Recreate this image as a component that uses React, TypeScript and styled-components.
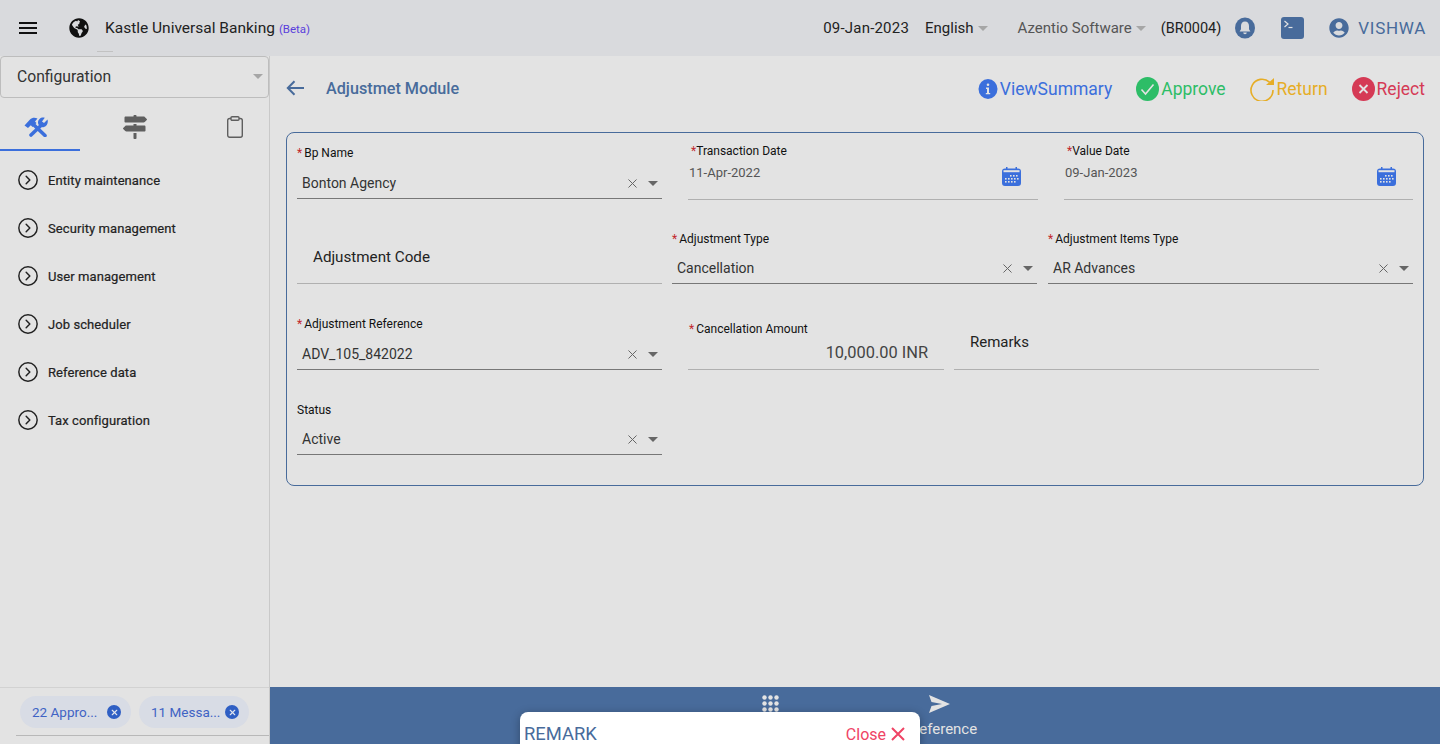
import React from "react";
import styled, { createGlobalStyle } from "styled-components";
import { FaGlobeAmericas, FaMapSigns, FaUserCircle } from "react-icons/fa";
import { CircleChevronRight, X } from "lucide-react";

const GlobalStyle = createGlobalStyle`
  html, body {
    margin: 0;
    padding: 0;
    height: 744px;
    overflow: hidden;
    background: #e3e3e3;
    font-family: Roboto, "Liberation Sans", sans-serif;
  }
  * { box-sizing: border-box; }
`;

const Page = styled.div`
  position: relative;
  width: 1440px;
  height: 744px;
  overflow: hidden;
  display: flex;
  flex-direction: column;
`;

const Header = styled.header`
  position: relative;
  height: 56px;
  flex: none;
  background: #d9dadd;
  display: flex;
  align-items: center;
  padding: 0 14px 0 19px;
`;

const HeaderMark = styled.span`
  position: absolute;
  left: 97px;
  bottom: 4px;
  width: 16px;
  height: 1px;
  background: #c2c2c2;
`;

const Burger = styled.div`
  width: 18px;
  display: flex;
  flex-direction: column;
  gap: 3px;
  span {
    height: 2px;
    background: #111;
  }
`;

const Globe = styled(FaGlobeAmericas)`
  margin-left: 32px;
  width: 20px;
  height: 20px;
  color: #111;
`;

const AppTitle = styled.div`
  margin-left: 16px;
  font-size: 15.5px;
  color: #222;
  display: flex;
  align-items: baseline;
  gap: 4px;
`;

const Beta = styled.span`
  font-size: 11.5px;
  color: #5b3fdc;
`;

const HeaderRight = styled.div`
  margin-left: auto;
  display: flex;
  align-items: center;
`;

const HeaderText = styled.span<{ $left: number; $size?: number; $color?: string; $spacing?: number }>`
  margin-left: ${(p) => p.$left}px;
  font-size: ${(p) => p.$size ?? 15}px;
  letter-spacing: ${(p) => p.$spacing ?? 0}px;
  color: ${(p) => p.$color ?? "#222"};
`;

const Caret = styled.span<{ $color?: string; $left?: number }>`
  display: inline-block;
  margin-left: ${(p) => p.$left ?? 4}px;
  border-left: 5px solid transparent;
  border-right: 5px solid transparent;
  border-top: 5px solid ${(p) => p.$color ?? "#a6a6a6"};
`;

const HeaderIcon = styled.span<{ $left: number }>`
  margin-left: ${(p) => p.$left}px;
  display: flex;
  color: #486b9b;
`;

const Body = styled.div`
  flex: 1;
  display: flex;
  min-height: 0;
`;

const Sidebar = styled.aside`
  width: 270px;
  flex: none;
  border-right: 1px solid #c9c9c9;
  display: flex;
  flex-direction: column;
`;

const ModuleSelect = styled.div`
  height: 42px;
  border: 1px solid #bdbdbd;
  border-radius: 4px;
  display: flex;
  align-items: center;
  justify-content: space-between;
  padding: 0 5px 2px 16px;
  font-size: 15.7px;
  color: #333;
`;

const Tabs = styled.div`
  display: grid;
  grid-template-columns: 80px 110px 80px;
  height: 53px;
`;

const Tab = styled.div<{ $active?: boolean; $inset?: number }>`
  display: flex;
  align-items: center;
  justify-content: center;
  color: #5f5f5f;
  border-bottom: 2px solid ${(p) => (p.$active ? "#3b6fdc" : "transparent")};
  padding-top: 7px;
  padding-left: ${(p) => Math.max(p.$inset ?? 0, 0)}px;
  padding-right: ${(p) => Math.max(-(p.$inset ?? 0), 0)}px;
`;

const MenuList = styled.nav`
  flex: 1;
  padding-top: 5px;
`;

const MenuItem = styled.div`
  height: 48px;
  display: flex;
  align-items: center;
  gap: 9px;
  padding-left: 17px;
  font-size: 13px;
  letter-spacing: 0.08px;
  color: #222;
  -webkit-text-stroke: 0.2px #222;
`;

const SideFooter = styled.div`
  height: 57px;
  flex: none;
  border-top: 1px solid #d2d2d2;
  padding: 8px 0 0 20px;
  position: relative;
  display: flex;
  gap: 8px;
  &::after {
    content: "";
    position: absolute;
    left: 16px;
    right: 0;
    bottom: 8px;
    height: 1px;
    background: #b8b8b8;
  }
`;

const Chip = styled.div<{ $width: number }>`
  width: ${(p) => p.$width}px;
  height: 32px;
  border-radius: 16px;
  background: #d8dce5;
  color: #3f63c4;
  font-size: 13.5px;
  display: flex;
  align-items: center;
  justify-content: space-between;
  padding: 0 10px 0 12px;
`;

const ChipClose = styled.span`
  width: 14px;
  height: 14px;
  border-radius: 50%;
  background: #2f5fc4;
  color: #e3e6ee;
  display: flex;
  align-items: center;
  justify-content: center;
`;

const Main = styled.main`
  flex: 1;
  min-width: 0;
  display: flex;
  flex-direction: column;
`;

const Content = styled.div`
  flex: 1;
  padding: 0 16px;
`;

const ActionBar = styled.div`
  height: 66px;
  margin: 0 -1px 10px 0;
  display: flex;
  align-items: center;
`;

const TitleGroup = styled.div`
  display: flex;
  align-items: center;
  padding-bottom: 2px;
`;

const PageTitle = styled.h1`
  margin: 0 0 0 22px;
  font-size: 16.2px;
  font-weight: 500;
  color: #486b9b;
`;

const Actions = styled.div`
  margin-left: auto;
  display: flex;
  align-items: center;
  gap: 24px;
`;

const Action = styled.div<{ $color: string }>`
  display: flex;
  align-items: center;
  gap: 2px;
  font-size: 17.5px;
  color: ${(p) => p.$color};
`;

const FormCard = styled.section`
  height: 354px;
  border: 1px solid #486b9b;
  border-radius: 8px;
  padding-left: 10px;
`;

const FormRow = styled.div<{ $height: number }>`
  display: flex;
  height: ${(p) => p.$height}px;
  align-items: flex-end;
`;

const Field = styled.div<{ $width: number; $left?: number; $line?: string; $height?: number }>`
  width: ${(p) => p.$width}px;
  height: ${(p) => p.$height ?? 66}px;
  margin-left: ${(p) => p.$left ?? 0}px;
  border-bottom: 1px solid ${(p) => p.$line ?? "#777"};
  display: flex;
  flex-direction: column;
  position: relative;
`;

const DateField = styled(Field)`
  margin-bottom: -1px;
`;

const Label = styled.label<{ $indent?: number }>`
  font-size: 12px;
  line-height: 14px;
  color: #111;
  padding-left: ${(p) => p.$indent ?? 0}px;
`;

const Star = styled.span<{ $tight?: boolean }>`
  color: #c2272d;
  margin-right: ${(p) => (p.$tight ? 0 : 2)}px;
`;

const SelectValue = styled.div`
  height: 30px;
  margin-top: auto;
  display: flex;
  align-items: center;
  padding: 0 4px 0 5px;
  font-size: 14px;
  color: #333;
`;

const SelectText = styled.span`
  flex: 1;
`;

const Cross = styled(X)`
  width: 15px;
  height: 15px;
  color: #666;
  margin-right: 8px;
`;

const DateValue = styled.div`
  display: flex;
  justify-content: space-between;
  padding: 7px 17px 0 1px;
  font-size: 13px;
  color: #555;
  svg {
    margin-top: 2px;
  }
`;

const PlainField = styled.div<{ $size: number; $indent: number; $top: number }>`
  padding: ${(p) => p.$top}px 0 0 ${(p) => p.$indent}px;
  font-size: ${(p) => p.$size}px;
  color: #222;
`;

const AmountValue = styled.div`
  text-align: right;
  padding: 7px 16px 0 0;
  font-size: 16.4px;
  color: #444;
`;

const FooterBar = styled.div`
  height: 57px;
  flex: none;
  background: #486b9b;
  display: flex;
  padding: 8px 0 0 492px;
  color: #e3e3e3;
`;

const FooterItem = styled.div<{ $left?: number; $iconInset?: number }>`
  margin-left: ${(p) => p.$left ?? 0}px;
  display: flex;
  flex-direction: column;
  align-items: flex-start;
  font-size: 15px;
  line-height: 16px;
  gap: 8px;
  svg {
    margin-left: ${(p) => p.$iconInset ?? 0}px;
  }
`;

const RemarkPanel = styled.div`
  position: absolute;
  left: 520px;
  top: 712px;
  width: 400px;
  height: 60px;
  background: #fff;
  border-radius: 8px;
  box-shadow: 0 2px 10px rgba(0, 0, 0, 0.3);
  display: flex;
  justify-content: space-between;
  padding: 12px 15px 0 4px;
`;

const RemarkTitle = styled.span`
  font-size: 18.4px;
  line-height: 20px;
  color: #486b9b;
`;

const RemarkClose = styled.span`
  display: flex;
  align-items: center;
  height: 20px;
  gap: 5px;
  font-size: 16px;
  color: #ef4465;
`;

const ToolsIcon = () => (
  <svg width="24" height="20" viewBox="0 0 24 20" fill="#3b6fdc" stroke="none">
    <path d="M0.500 8.500L6 2.500C8 0.500 11 0.300 13.500 1.500L11 4.500L12.500 6L8.500 10L6.800 8.300L4 11z" />
    <path d="M10 8l11 10.500" stroke="#3b6fdc" strokeWidth="3.600" strokeLinecap="round" />
    <path d="M17.500 8L7 18" stroke="#3b6fdc" strokeWidth="3.600" strokeLinecap="round" />
    <path d="M23.500 2.500L20 6L18 4.500L20.800 0.800C17.500-0.300 14 2 14 5.500C14 8.500 17 11 20 10C23 9 24.500 5.500 23.500 2.500z" />
  </svg>
);

const Clipboard = () => (
  <svg width="16" height="22" viewBox="0 0 16 22" fill="none" stroke="#5f5f5f" strokeWidth="1.4">
    <rect x="0.7" y="2.5" width="14.6" height="18.800" rx="2" />
    <rect x="4" y="0.8" width="8" height="3.4" rx="1" fill="#e3e3e3" />
  </svg>
);

const Bell = () => (
  <svg width="20" height="22" viewBox="0 0 20 22">
    <ellipse cx="10" cy="11" rx="10" ry="10.500" fill="#486b9b" />
    <path d="M10 4.500c-2.600 0-4 2-4 4.500v3.200L4.600 14.500h10.800L14 12.200V9c0-2.500-1.400-4.500-4-4.500z" fill="#d9dadd" />
    <path d="M8.200 15.500h3.600a1.800 1.800 0 0 1-3.600 0z" fill="#d9dadd" />
  </svg>
);

const Terminal = () => (
  <svg width="23" height="22" viewBox="0 0 23 22">
    <rect width="23" height="22" rx="3" fill="#486b9b" />
    <path d="M3.500 4l3.500 3-3.500 3" fill="none" stroke="#e3e3e3" strokeWidth="1.200" />
    <path d="M7.500 10.500h4" stroke="#e3e3e3" strokeWidth="1.200" />
  </svg>
);

const BackArrow = () => (
  <svg width="18" height="16" viewBox="0 0 18 16" fill="none" stroke="#486b9b" strokeWidth="2">
    <path d="M18 8H2M8.500 1.200L1.800 8l6.700 6.800" />
  </svg>
);

const InfoIcon = () => (
  <svg width="20" height="20" viewBox="0 0 20 20">
    <ellipse cx="10" cy="10" rx="9.500" ry="10" fill="#3b6fdc" />
    <circle cx="10" cy="5.800" r="1.300" fill="#e3e3e3" />
    <path d="M8 8.600h3v5.400h1.200v1.300H7.800V14H9V9.900H8z" fill="#e3e3e3" />
  </svg>
);

const ApproveIcon = () => (
  <svg width="23" height="24" viewBox="0 0 23 24">
    <ellipse cx="11.500" cy="12" rx="11.500" ry="12" fill="#2dbd67" />
    <path d="M5.500 12.500l4 4.500 8-9.500" fill="none" stroke="#e3e3e3" strokeWidth="1.600" />
  </svg>
);

const ReturnIcon = () => (
  <svg width="25" height="24" viewBox="0 0 25 24" fill="none">
    <path d="M19.500 5.200A11 11 0 1 0 23 13" stroke="#e6ad26" strokeWidth="1.600" />
    <path d="M16 8h8V1z" fill="#e6ad26" />
  </svg>
);

const RejectIcon = () => (
  <svg width="23" height="24" viewBox="0 0 23 24">
    <ellipse cx="11.500" cy="12" rx="11.500" ry="12" fill="#d53a55" />
    <path d="M7.500 8l8 8M15.500 8l-8 8" stroke="#e3e3e3" strokeWidth="1.800" />
  </svg>
);

const CalendarIcon = () => (
  <svg width="19" height="19" viewBox="0 0 19 19">
    <path d="M3 1.500h13a3 3 0 0 1 3 3V16a3 3 0 0 1-3 3H3a3 3 0 0 1-3-3V4.500a3 3 0 0 1 3-3z" fill="#3b6fdc" />
    <rect x="1.500" y="3.200" width="16" height="2" fill="#e3e3e3" />
    <rect x="4" y="0" width="1.500" height="3" fill="#3b6fdc" />
    <rect x="13.500" y="0" width="1.500" height="3" fill="#3b6fdc" />
    {[
      [8, 8], [11, 8], [14, 8],
      [3, 11], [6, 11], [9, 11], [12, 11], [15, 11],
      [3, 14], [6, 14], [9, 14], [12, 14],
    ].map(([x, y]) => (
      <rect key={`${x}-${y}`} x={x} y={y} width="1.600" height="1.600" fill="#e3e3e3" />
    ))}
  </svg>
);

const DotsIcon = () => (
  <svg width="18" height="18" viewBox="0 0 18 18" fill="#e3e3e3">
    {[0, 1, 2].flatMap((r) =>
      [0, 1, 2].map((c) => <circle key={`${r}-${c}`} cx={2.500 + c * 6} cy={2.500 + r * 6} r="2.200" />)
    )}
  </svg>
);

const SendIcon = () => (
  <svg width="21" height="18" viewBox="0 0 21 18" fill="#e3e3e3">
    <path d="M0 0l21 9L0 18l2.500-7L13 9 2.500 7z" />
  </svg>
);

const CloseMark = () => (
  <svg width="14" height="14" viewBox="0 0 14 14" fill="none" stroke="#ef4465" strokeWidth="2">
    <path d="M1 1l12 12M13 1L1 13" />
  </svg>
);

const menuItems = [
  "Entity maintenance",
  "Security management",
  "User management",
  "Job scheduler",
  "Reference data",
  "Tax configuration",
];

const Select = ({ value }: { value: string }) => (
  <SelectValue>
    <SelectText>{value}</SelectText>
    <Cross strokeWidth={1.6} />
    <Caret $color="#666" $left={0} />
  </SelectValue>
);

export default function App() {
  return (
    <Page>
      <GlobalStyle />
      <Header>
        <Burger>
          <span />
          <span />
          <span />
        </Burger>
        <Globe />
        <AppTitle>
          Kastle Universal Banking <Beta>(Beta)</Beta>
        </AppTitle>
        <HeaderMark />
        <HeaderRight>
          <HeaderText $left={0} $spacing={0.2}>09-Jan-2023</HeaderText>
          <HeaderText $left={16}>English</HeaderText>
          <Caret />
          <HeaderText $left={30} $color="#555">Azentio Software</HeaderText>
          <Caret />
          <HeaderText $left={15} $size={14.5}>(BR0004)</HeaderText>
          <HeaderIcon $left={14}><Bell /></HeaderIcon>
          <HeaderIcon $left={26}><Terminal /></HeaderIcon>
          <HeaderIcon $left={25}><FaUserCircle size={20} /></HeaderIcon>
          <HeaderText $left={9} $size={17} $spacing={0.7} $color="#486b9b">VISHWA</HeaderText>
        </HeaderRight>
      </Header>
      <Body>
        <Sidebar>
          <ModuleSelect>
            Configuration
            <Caret $left={0} />
          </ModuleSelect>
          <Tabs>
            <Tab $active $inset={-8}><ToolsIcon /></Tab>
            <Tab><FaMapSigns size={24} /></Tab>
            <Tab $inset={10}><Clipboard /></Tab>
          </Tabs>
          <MenuList>
            {menuItems.map((item) => (
              <MenuItem key={item}>
                <CircleChevronRight size={22} strokeWidth={1.6} color="#222" />
                {item}
              </MenuItem>
            ))}
          </MenuList>
          <SideFooter>
            <Chip $width={111}>
              22 Appro...
              <ChipClose><X size={9} strokeWidth={3} /></ChipClose>
            </Chip>
            <Chip $width={110}>
              11 Messa...
              <ChipClose><X size={9} strokeWidth={3} /></ChipClose>
            </Chip>
          </SideFooter>
        </Sidebar>
        <Main>
          <Content>
            <ActionBar>
              <TitleGroup>
                <BackArrow />
                <PageTitle>Adjustmet Module</PageTitle>
              </TitleGroup>
              <Actions>
                <Action $color="#3b6fdc"><InfoIcon />ViewSummary</Action>
                <Action $color="#2dbd67"><ApproveIcon />Approve</Action>
                <Action $color="#e6ad26"><ReturnIcon />Return</Action>
                <Action $color="#d53a55"><RejectIcon />Reject</Action>
              </Actions>
            </ActionBar>
            <FormCard>
              <FormRow $height={66}>
                <Field $width={365} $height={53}>
                  <Label><Star>*</Star>Bp Name</Label>
                  <Select value="Bonton Agency" />
                </Field>
                <DateField $width={350} $left={26} $line="#b0b0b0" $height={56}>
                  <Label $indent={3}><Star $tight>*</Star>Transaction Date</Label>
                  <DateValue>11-Apr-2022<CalendarIcon /></DateValue>
                </DateField>
                <DateField $width={349} $left={26} $line="#b0b0b0" $height={56}>
                  <Label $indent={3}><Star $tight>*</Star>Value Date</Label>
                  <DateValue>09-Jan-2023<CalendarIcon /></DateValue>
                </DateField>
              </FormRow>
              <FormRow $height={85}>
                <Field $width={365} $line="#b0b0b0">
                  <PlainField $size={15.2} $indent={16} $top={30}>Adjustment Code</PlainField>
                </Field>
                <Field $width={365} $left={10} $height={52}>
                  <Label><Star>*</Star>Adjustment Type</Label>
                  <Select value="Cancellation" />
                </Field>
                <Field $width={365} $left={11} $height={52}>
                  <Label><Star>*</Star>Adjustment Items Type</Label>
                  <Select value="AR Advances" />
                </Field>
              </FormRow>
              <FormRow $height={86}>
                <Field $width={365} $height={53}>
                  <Label><Star>*</Star>Adjustment Reference</Label>
                  <Select value="ADV_105_842022" />
                </Field>
                <Field $width={256} $left={26} $line="#b0b0b0" $height={48}>
                  <Label $indent={1}><Star>*</Star>Cancellation Amount</Label>
                  <AmountValue>10,000.00 INR</AmountValue>
                </Field>
                <Field $width={365} $left={10} $line="#b0b0b0" $height={50}>
                  <PlainField $size={15} $indent={16} $top={13}>Remarks</PlainField>
                </Field>
              </FormRow>
              <FormRow $height={85}>
                <Field $width={365} $height={52}>
                  <Label>Status</Label>
                  <Select value="Active" />
                </Field>
              </FormRow>
            </FormCard>
          </Content>
          <FooterBar>
            <FooterItem><DotsIcon /></FooterItem>
            <FooterItem $left={130} $iconInset={19}><SendIcon />Reference</FooterItem>
          </FooterBar>
        </Main>
      </Body>
      <RemarkPanel>
        <RemarkTitle>REMARK</RemarkTitle>
        <RemarkClose>Close <CloseMark /></RemarkClose>
      </RemarkPanel>
    </Page>
  );
}
